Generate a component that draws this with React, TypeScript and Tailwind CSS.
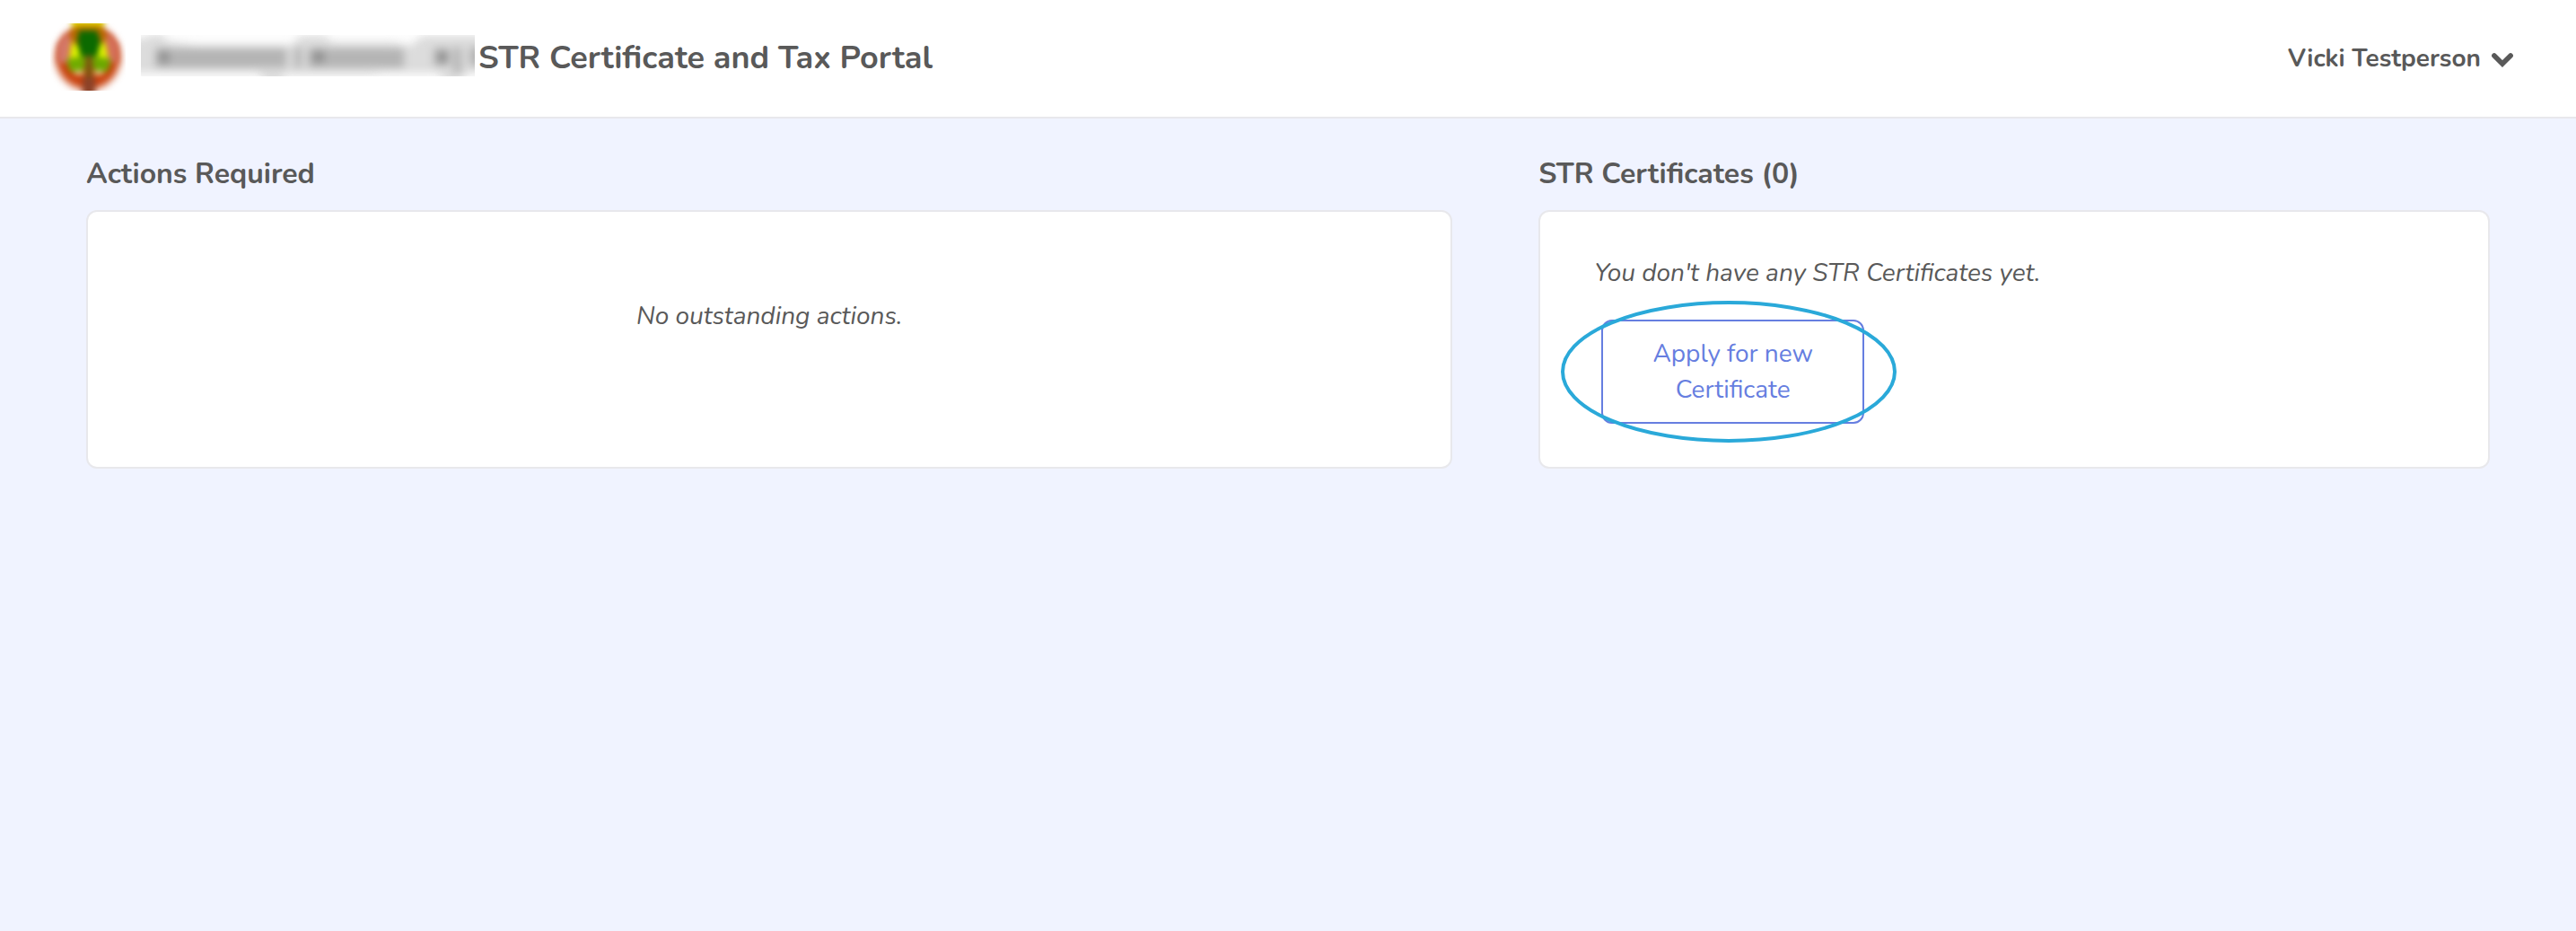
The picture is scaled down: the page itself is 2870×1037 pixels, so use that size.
import type { ReactNode } from "react";

function Seal() {
  return (
    <svg viewBox="0 0 84 75" className="mb-1 h-[75px] w-[84px] shrink-0" role="img" aria-label="County seal">
      <defs>
        <filter id="seal-soft" x="-20%" y="-20%" width="140%" height="140%" colorInterpolationFilters="sRGB">
          <feGaussianBlur stdDeviation="3.4" />
        </filter>
        <filter id="seal-edge" x="-20%" y="-20%" width="140%" height="140%" colorInterpolationFilters="sRGB">
          <feGaussianBlur stdDeviation="4" />
        </filter>
      </defs>
      <circle cx="42" cy="38" r="36" fill="#c94410" filter="url(#seal-edge)" />
      <g filter="url(#seal-soft)">
        <path d="M8 24 L18 10 L24 18 L20 44 L8 44 Z" fill="#d47868" />
        <path d="M76 24 L66 10 L60 18 L64 44 L76 44 Z" fill="#d4705a" />
        <path d="M22 -8 H62 L58 9 H26 Z" fill="#e0d000" />
        <path d="M22 9 L30 3 H56 L63 12 L60 24 H24 Z" fill="#b86c00" />
        <path d="M24 20 L34 28 L36 44 L20 46 Z" fill="#dcf000" />
        <path d="M61 20 L50 28 L48 44 L66 46 Z" fill="#dcf000" />
        <path d="M32 8 H52 L56 20 L53 34 L47 44 H37 L33 34 L30 20 Z" fill="#0c6a00" />
        <path d="M18 40 L40 36 L38 52 L22 54 Z" fill="#70ac00" />
        <path d="M68 40 L46 36 L48 52 L64 54 Z" fill="#6ca800" />
        <path d="M26 53 H37 V57 H28 Z M49 53 H60 L58 57 H49 Z" fill="#ecdca0" />
        <path d="M39 36 H47 V66 H39 Z" fill="#7c5410" />
        <path d="M36 60 H50 V82 H36 Z" fill="#8c4228" />
      </g>
    </svg>
  );
}

function HiddenName() {
  return (
    <svg viewBox="0 0 372 46" className="mb-1.5 h-[46px] w-[372px] shrink-0" role="img" aria-label="Hidden name">
      <defs>
        <filter id="name-soft" x="-10%" y="-50%" width="120%" height="200%" colorInterpolationFilters="sRGB">
          <feGaussianBlur stdDeviation="5" />
        </filter>
      </defs>
      <rect width="372" height="46" fill="#fdfdfd" />
      <g filter="url(#name-soft)">
        <path
          d="M-10 4 H4 L10 0 H24 L30 7 L60 11 H168 L178 1 H204 L214 8 H280 L300 12 L314 1 H384 V42 H366 L352 52 H340 L330 42 H270 L256 44 H160 L156 52 H140 L130 42 H-10 Z"
          fill="#dcdcdc"
        />
        <path
          d="M16 15 H162 V36 H16 Z M171 14 H179 V36 H171 Z M186 15 H293 V36 H186 Z M326 15 H344 V34 H326 Z M348 14 H357 V42 H348 Z M366 14 H382 V34 H366 Z"
          fill="#b4b4b4"
        />
        <path d="M20 18 H31 V31 H20 Z M192 17 H204 V31 H192 Z M331 18 H341 V31 H331 Z" fill="#909090" />
      </g>
    </svg>
  );
}

function Panel({ title, className, bodyClass, children }: { title: string; className: string; bodyClass: string; children: ReactNode }) {
  return (
    <section className={"flex flex-col gap-4 " + className}>
      <h2 className="text-[32px] leading-12 font-bold">{title}</h2>
      <div className={"min-h-72 rounded-xl border-2 border-[#e8e8ec] bg-white " + bodyClass}>{children}</div>
    </section>
  );
}

export default function App() {
  return (
    <div className="min-h-screen bg-[#f0f3ff] font-['Nunito','Open_Sans',sans-serif] text-[28px] leading-10 text-[#595959]">
      <header className="flex h-33 items-center justify-between border-b-2 border-[#e8e8ec] bg-white pr-[70px] pl-14">
        <div className="flex items-center">
          <Seal />
          <div className="ml-[17px] flex items-center gap-1">
            <HiddenName />
            <h1 className="text-4xl font-bold">STR Certificate and Tax Portal</h1>
          </div>
        </div>
        <button type="button" className="flex items-center gap-3 font-bold">
          Vicki Testperson
          <svg viewBox="0 0 24 16" className="mt-1 h-4 w-6" fill="none" stroke="currentColor" strokeWidth="5.6" strokeLinecap="round" aria-hidden="true">
            <path d="M2.9 3 L12 12 L21.1 3" strokeLinejoin="miter" />
          </svg>
        </button>
      </header>

      <main className="grid grid-cols-12 gap-x-24 px-24 pt-[38px]">
        <Panel title="Actions Required" className="col-span-7" bodyClass="flex justify-center pt-24">
          <p className="italic">No outstanding actions.</p>
        </Panel>

        <Panel title="STR Certificates (0)" className="col-span-5" bodyClass="px-15 pt-12">
          <p className="italic">You don't have any STR Certificates yet.</p>
          <div className="relative mt-8 ml-2 w-[293px]">
            <button type="button" className="w-full rounded-xl border-2 border-[#667ee0] px-12 py-4 text-[#667ee0]">
              Apply for new Certificate
            </button>
            <svg viewBox="0 0 374 158" className="pointer-events-none absolute -top-[21px] -left-[45px] h-[158px] w-[374px]" aria-hidden="true">
              <ellipse cx="187" cy="79" rx="185" ry="77" fill="none" stroke="#2aa9d9" strokeWidth="4" />
            </svg>
          </div>
        </Panel>
      </main>
    </div>
  );
}
